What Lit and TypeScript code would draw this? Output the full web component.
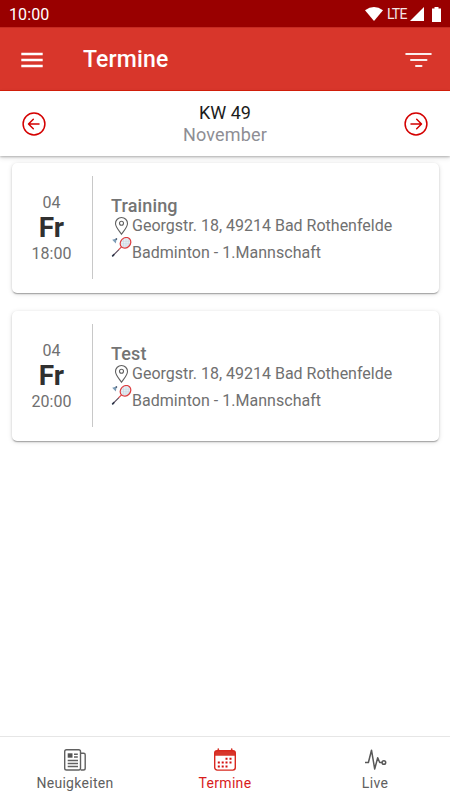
import { LitElement, html, css, svg } from "lit";
import { customElement, property } from "lit/decorators.js";

interface Appointment {
  day: string;
  weekday: string;
  time: string;
  title: string;
  place: string;
  team: string;
}

const appointments: Appointment[] = [
  { day: "04", weekday: "Fr", time: "18:00", title: "Training", place: "Georgstr. 18, 49214 Bad Rothenfelde", team: "Badminton - 1.Mannschaft" },
  { day: "04", weekday: "Fr", time: "20:00", title: "Test", place: "Georgstr. 18, 49214 Bad Rothenfelde", team: "Badminton - 1.Mannschaft" },
];

const arrowCircle = (right: boolean) => html`
  <svg width="24" height="24" viewBox="0 0 24 24" fill="none" stroke="#d40000" stroke-width="1.5" stroke-linecap="round" stroke-linejoin="round">
    <circle cx="12" cy="12" r="10.9" />
    ${right
      ? svg`<path d="M7 12h10.3M12.7 7.3l4.8 4.7-4.8 4.7" />`
      : svg`<path d="M17 12H6.7M11.3 7.3L6.5 12l4.8 4.7" />`}
  </svg>`;

@customElement("appointment-card")
export class AppointmentCard extends LitElement {
  @property({ attribute: false }) item!: Appointment;

  static styles = css`
    :host {
      display: flex;
      align-items: center;
      box-sizing: border-box;
      height: 130.5px;
      background: #fff;
      border-radius: 5px;
      box-shadow: 0 2px 1px -1px rgba(0, 0, 0, 0.2), 0 1px 2px rgba(0, 0, 0, 0.16), 0 1px 5px rgba(0, 0, 0, 0.13);
      color: #707070;
      font-size: 16px;
    }
    .date {
      width: 81px;
      height: 103px;
      box-sizing: border-box;
      border-right: 1px solid #c8c8c8;
      padding: 15.5px 1px 0 0;
      text-align: center;
      flex: none;
    }
    .day { line-height: 22px; }
    .weekday { font-size: 28px; line-height: 28px; font-weight: 700; color: #303030; }
    .time { line-height: 24px; }
    .info { padding-left: 18px; height: 74px; margin-top: 7.5px; }
    .title { font-size: 18px; line-height: 22px; font-weight: 500; color: #747474; letter-spacing: 0.15px; }
    .row { display: flex; white-space: nowrap; }
    .place { line-height: 18px; height: 21px; }
    .team { line-height: 30px; height: 31px; letter-spacing: 0.03px; }
    .icon { width: 21px; flex: none; margin-top: -0.7px; }
    .icon svg { display: block; }
  `;

  render() {
    const { day, weekday, time, title, place, team } = this.item;
    return html`
      <div class="date">
        <div class="day">${day}</div>
        <div class="weekday">${weekday}</div>
        <div class="time">${time}</div>
      </div>
      <div class="info">
        <div class="title">${title}</div>
        <div class="row place">
          <span class="icon">
            <svg width="21" height="20" viewBox="0 0 21 20" fill="none" stroke="#606060" stroke-width="1.1">
              <path d="M10.500 18.300C8 14.600 4.500 11 4.500 7.500a6 6 0 0 1 12 0c0 3.500-3.500 7.100-6 10.800z" />
              <circle cx="10.500" cy="7.300" r="2" />
            </svg>
          </span>
          <span>${place}</span>
        </div>
        <div class="row team">
          <span class="icon">
            <svg width="21" height="20" viewBox="0 0 21 20" fill="none">
              <path d="M1.700 18.800l1.200-1.200" stroke="#283246" stroke-width="1.700" stroke-linecap="round" />
              <path d="M2.900 17.600l5-5" stroke="#55485a" stroke-width="1.200" />
              <path d="M7.500 12.900l3.500-3.500" stroke="#d9484a" stroke-width="1.200" />
              <ellipse cx="14.500" cy="5.800" rx="4.900" ry="5.700" transform="rotate(45 14.500 5.800)" fill="#e8eff4" />
              <path d="M12.500 1.700v8.500M15 1v9.300M17.300 2v7M10 4.300h9M9.500 6.800h9.500M10.500 9h7" stroke="#c5d3df" stroke-width=".5" />
              <ellipse cx="14.500" cy="5.800" rx="4.900" ry="5.700" transform="rotate(45 14.500 5.800)" stroke="#dd3d40" stroke-width="1.200" />
              <path d="M1.200 2.800L5.700 1.600l-.9 5z" fill="#7d9cb6" />
              <path d="M4.900 2.500l1-1" stroke="#3c4a63" stroke-width="1.600" />
            </svg>
          </span>
          <span>${team}</span>
        </div>
      </div>
    `;
  }
}

@customElement("app-root")
export class AppRoot extends LitElement {
  static styles = css`
    :host {
      display: flex;
      flex-direction: column;
      width: 450px;
      height: 800px;
      overflow: hidden;
      background: #fff;
      font-family: Roboto, sans-serif;
    }
    svg { display: block; flex: none; }
    .status {
      height: 27px;
      flex: none;
      box-sizing: border-box;
      padding: 1px 9px 0 9px;
      background: #990000;
      color: #fff;
      display: flex;
      align-items: center;
      font-size: 16px;
    }
    .clock { flex: 1; letter-spacing: 0.1px; }
    .lte { font-size: 14px; letter-spacing: -0.8px; margin: 0 3px 0 4px; width: 20px; opacity: 0.9; white-space: nowrap; }
    .battery { margin-left: 8px; }
    .header {
      height: 64px;
      flex: none;
      box-sizing: border-box;
      background: #d8362b;
      border-bottom: 1px solid #d9200c;
      border-top: 1px solid #c52a22;
      display: flex;
      align-items: center;
      padding: 1px 18px 0 21px;
      color: #fff;
    }
    .heading { flex: 1; font-size: 23px; font-weight: 500; margin: 0 0 0 40px; line-height: 28px; letter-spacing: 0.15px; }
    .week {
      height: 65px;
      flex: none;
      box-sizing: border-box;
      display: flex;
      align-items: center;
      justify-content: space-between;
      padding: 0 22px;
      background: #fff;
      box-shadow: 0 1px 2px rgba(0, 0, 0, 0.24), 0 2px 5px rgba(0, 0, 0, 0.12);
      z-index: 1;
    }
    .label { text-align: center; font-size: 18px; line-height: 22px; }
    .kw { color: #1c1c1c; }
    .month { color: #8e8e94; letter-spacing: 0.15px; }
    .list { flex: 1; padding: 6.5px 11px 0 12px; display: flex; flex-direction: column; gap: 17.5px; }
    .tabs {
      height: 64px;
      flex: none;
      box-sizing: border-box;
      border-top: 1px solid #e6e6e6;
      display: grid;
      grid-template-columns: repeat(3, 1fr);
    }
    .tab { display: flex; flex-direction: column; align-items: center; padding-top: 11px; color: #606060; font-size: 14px; line-height: 22px; letter-spacing: 0.3px; }
    .tab.active { color: #d81c1c; }
  `;

  render() {
    return html`
      <div class="status">
        <span class="clock">10:00</span>
        <svg width="18" height="14" viewBox="0 0 18 14"><path d="M9 14L0 3.200Q9-3.200 18 3.200z" fill="#fff" /></svg>
        <span class="lte">LTE</span>
        <svg width="14" height="14" viewBox="0 0 14 14"><path d="M0 14L14 0v14z" fill="#fff" /></svg>
        <svg class="battery" width="9" height="15" viewBox="0 0 9 15"><path d="M2.500 0h4v1.500H9V15H0V1.500h2.500z" fill="#fff" /></svg>
      </div>
      <div class="header">
        <svg width="22" height="16" viewBox="0 0 22 16"><path d="M.3 2h21.400M.3 8h21.400M.3 14h21.400" stroke="#fff" stroke-width="2.400" /></svg>
        <h1 class="heading">Termine</h1>
        <svg width="27" height="16" viewBox="0 0 27 16"><path d="M1.200 2h24.600M6 8h15.500M11 14h5.500" stroke="#fff" stroke-width="2" stroke-linecap="round" opacity=".92" /></svg>
      </div>
      <div class="week">
        ${arrowCircle(false)}
        <div class="label">
          <div class="kw">KW 49</div>
          <div class="month">November</div>
        </div>
        ${arrowCircle(true)}
      </div>
      <div class="list">
        ${appointments.map((item) => html`<appointment-card .item=${item}></appointment-card>`)}
      </div>
      <div class="tabs">
        <div class="tab">
          <svg width="24" height="24" viewBox="0 0 24 24" fill="none" stroke="#606060" stroke-width="1.400" stroke-linejoin="round">
            <rect x="1.700" y="1.700" width="15.800" height="20.300" rx="1.800" />
            <path d="M17.500 5.300h3.200q1.500 0 1.500 1.500v13.400q0 1.800-1.800 1.800h-2.600" />
            <path d="M11 6.300h3.800M11 9h3.800M4.700 12.500h10.300M4.700 15.500h10.300M4.700 18.500h10.300" />
            <rect x="4.700" y="5.300" width="4.800" height="4.400" fill="#555" stroke="none" />
          </svg>
          <span>Neuigkeiten</span>
        </div>
        <div class="tab active">
          <svg width="24" height="24" viewBox="0 0 24 24" fill="none">
            <path d="M1.500 7.700V5q0-2.500 2.500-2.500h16q2.500 0 2.500 2.500v2.700z" fill="#d8362b" />
            <path d="M5.300 1v3M18.700 1v3" stroke="#d8362b" stroke-width="1.600" stroke-linecap="round" />
            <rect x="1.700" y="2.700" width="20.600" height="19.400" rx="2.500" stroke="#d8281f" stroke-width="1.400" />
            <path d="M12.500 10.700h2M16.500 10.700h2M4.800 14.600h2M8.700 14.600h2M12.500 14.600h2M16.500 14.600h2M4.800 18.500h2M8.700 18.500h2M12.500 18.500h2" stroke="#d40f0f" stroke-width="2" />
          </svg>
          <span>Termine</span>
        </div>
        <div class="tab">
          <svg width="24" height="24" viewBox="0 0 24 24" fill="none" stroke="#585858" stroke-width="1.500" stroke-linejoin="round">
            <path d="M2 14.500h3.400L8.500 2.200l3.200 18.800 3-11.300 2 4.800h2.300" />
            <circle cx="20.900" cy="14.500" r="1.800" />
          </svg>
          <span>Live</span>
        </div>
      </div>
    `;
  }
}
